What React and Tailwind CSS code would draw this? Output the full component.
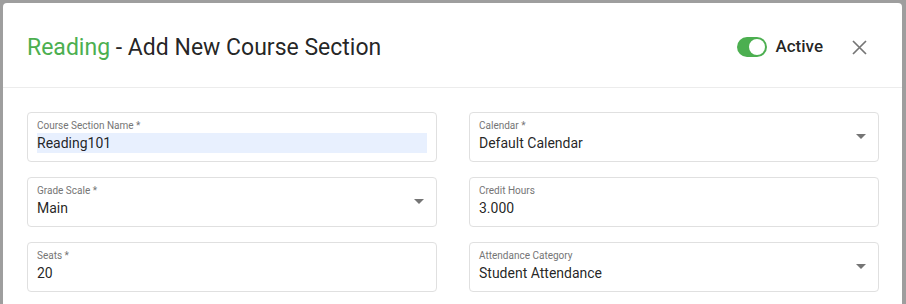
import { useState } from "react";

const fields = [
  { label: "Course Section Name *", value: "Reading101", input: true },
  { label: "Calendar *", value: "Default Calendar", select: true },
  { label: "Grade Scale *", value: "Main", select: true },
  { label: "Credit Hours", value: "3.000" },
  { label: "Seats *", value: "20" },
  { label: "Attendance Category", value: "Student Attendance", select: true },
];

function Caret() {
  return (
    <svg width="10" height="5" viewBox="0 0 10 5" className="block">
      <path d="M0 0h10L5 5z" fill="#757575" />
    </svg>
  );
}

function Field({ field }) {
  return (
    <div className="h-[50px] rounded-[4px] border border-[#e0e0e0] bg-white pl-[9px] pr-[12px] pt-[6px] flex items-start">
      <div className="flex-1 min-w-0">
        <div className="text-[10px] leading-[13px] text-[#757575]">{field.label}</div>
        <div
          className={`h-[20px] leading-[20px] text-[14px] text-[rgba(0,0,0,0.87)] mt-px ${
            field.input ? "bg-[#e8f0fe] mr-[-3px]" : ""
          }`}
        >
          {field.value}
        </div>
      </div>
      {field.select && (
        <div className="mt-[15px] ml-2">
          <Caret />
        </div>
      )}
    </div>
  );
}

export default function App() {
  const [active, setActive] = useState(true);

  return (
    <div
      className="w-[906px] h-[304px] bg-[#9e9e9e] pt-[3px] pl-[3px] pr-[4px] overflow-hidden"
      style={{ fontFamily: "Roboto, 'Liberation Sans', sans-serif" }}
    >
      <div className="h-[320px] bg-white rounded-[4px]">
        {/* Header */}
        <header className="h-[85px] flex items-center justify-between pl-[24px] pr-[35px] pt-[4px] border-b border-[#ececec]">
          <h1 className="text-[23px] leading-none text-[rgba(0,0,0,0.87)]">
            <span className="text-[#4caf50]">Reading</span> - Add New Course Section
          </h1>
          <div className="flex items-center">
            <button
              onClick={() => setActive(!active)}
              className={`w-[30px] h-[20px] rounded-full flex items-center px-[2px] ${
                active ? "bg-[#4caf50] justify-end" : "bg-[#bdbdbd] justify-start"
              }`}
              aria-label="Active"
            >
              <span className="w-[16px] h-[16px] rounded-full bg-white" />
            </button>
            <span className="ml-[8px] text-[17px] font-medium text-[rgba(0,0,0,0.87)]">Active</span>
            <button className="ml-[28px] w-[16px] h-[16px] flex items-center justify-center" aria-label="Close">
              <svg width="15" height="15" viewBox="0 0 15 15">
                <path d="M1 1L14 14M14 1L1 14" stroke="#757575" strokeWidth="1.7" />
              </svg>
            </button>
          </div>
        </header>

        {/* Form */}
        <main className="pl-[24px] pt-[24px] pr-[23px] grid grid-cols-2 gap-x-[32px] gap-y-[15px]">
          {fields.map((f) => (
            <Field key={f.label} field={f} />
          ))}
        </main>
      </div>
    </div>
  );
}
